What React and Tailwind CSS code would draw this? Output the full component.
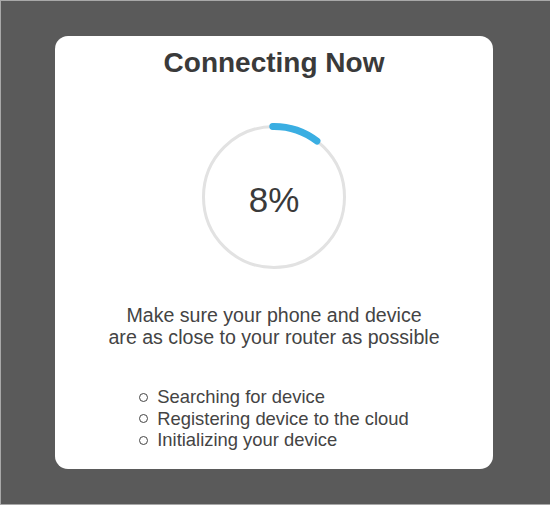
export default function App() {
  const r = 70.5;
  const cx = 75;
  const cy = 75;
  const a0 = (-1 * Math.PI) / 180;
  const a1 = (37.5 * Math.PI) / 180;
  const x0 = cx + r * Math.sin(a0);
  const y0 = cy - r * Math.cos(a0);
  const x1 = cx + r * Math.sin(a1);
  const y1 = cy - r * Math.cos(a1);
  const items = [
    "Searching for device",
    "Registering device to the cloud",
    "Initializing your device",
  ];
  return (
    <div
      className="w-[550px] h-[505px] bg-[#5a5a5a] border-t border-l border-b border-[#a8a8a8] pt-[35px] pl-[54px]"
      style={{ fontFamily: '"Liberation Sans", Arial, sans-serif' }}
    >
      <div className="w-[438px] h-[433px] bg-white rounded-[13px] flex flex-col items-center pt-[11px]">
        <h1 className="text-[28px] leading-[32px] font-bold text-[#3a3a3a]">
          Connecting Now
        </h1>
        <div className="relative w-[150px] h-[150px] mt-[43px]">
          <svg width="150" height="150" viewBox="0 0 150 150">
            <circle cx={cx} cy={cy} r={r} fill="none" stroke="#e2e2e2" strokeWidth="3" />
            <path
              d={`M ${x0} ${y0} A ${r} ${r} 0 0 1 ${x1} ${y1}`}
              fill="none"
              stroke="#3aaee2"
              strokeWidth="7"
              strokeLinecap="round"
            />
          </svg>
          <div className="absolute inset-0 flex items-center justify-center text-[35px] leading-none text-[#3a3a3a] pt-[4px]">
            8%
          </div>
        </div>
        <p className="mt-[32px] text-[19.6px] leading-[22px] text-[#444] text-center">
          Make sure your phone and device
          <br />
          are as close to your router as possible
        </p>
        <ul className="mt-[38px] text-[18.4px] leading-[21.5px] text-[#444]">
          {items.map((t) => (
            <li key={t} className="flex items-center">
              <span className="w-[9px] h-[9px] rounded-full border-[1.5px] border-[#444] mr-[9px] mt-[1px]" />
              {t}
            </li>
          ))}
        </ul>
      </div>
    </div>
  );
}
